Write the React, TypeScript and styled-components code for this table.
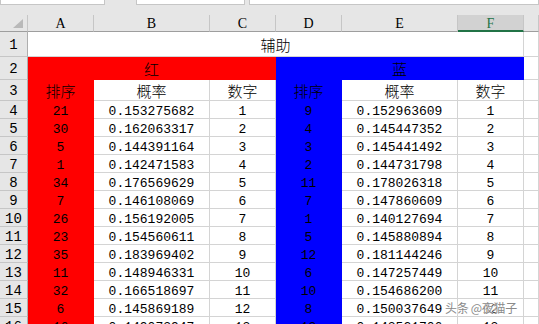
import React from 'react';
import styled, { createGlobalStyle } from 'styled-components';

const GlobalStyle = createGlobalStyle`
  html, body {
    margin: 0;
    padding: 0;
    background: #ffffff;
    overflow: hidden;
  }
  #root {
    width: 539px;
    height: 324px;
    overflow: hidden;
  }
`;

const RED = '#ff0000';
const BLUE = '#0000ff';
const GRID = '#d4d4d4';

const COLUMNS = ['A', 'B', 'C', 'D', 'E', 'F'];

const RED_ORDER = ['21', '30', '5', '1', '34', '7', '26', '23', '35', '11', '32', '6', '16'];
const RED_PROB = [
  '0.153275682',
  '0.162063317',
  '0.144391164',
  '0.142471583',
  '0.176569629',
  '0.146108069',
  '0.156192005',
  '0.154560611',
  '0.183969402',
  '0.148946331',
  '0.166518697',
  '0.145869189',
  '0.149073947',
];
const BLUE_ORDER = ['9', '4', '3', '2', '11', '7', '1', '5', '12', '6', '10', '8', '13'];
const BLUE_PROB = [
  '0.152963609',
  '0.145447352',
  '0.145441492',
  '0.144731798',
  '0.178026318',
  '0.147860609',
  '0.140127694',
  '0.145880894',
  '0.181144246',
  '0.147257449',
  '0.154686200',
  '0.150037649',
  '0.143521706',
];

const App: React.FC = () => {
  return (
    <>
      <GlobalStyle />
      <Screen>
        <TopStrip>
          <BarBox width={105} />
          <BarBox width={109} />
          <BarBox grow />
        </TopStrip>

        <Sheet>
          <Corner>
            <CornerMark />
          </Corner>
          {COLUMNS.map((c) => (
            <ColHeader key={c} selected={c === 'F'}>
              {c}
            </ColHeader>
          ))}
          <ColHeader />

          {/* row 1 */}
          <RowHeader>1</RowHeader>
          <Cell span={6} cjk>
            辅助
          </Cell>
          <Cell />

          {/* row 2 */}
          <RowHeader>2</RowHeader>
          <Cell span={3} fill={RED} cjk>
            红
          </Cell>
          <Cell span={3} fill={BLUE} cjk>
            蓝
          </Cell>
          <Cell />

          {/* row 3 */}
          <RowHeader>3</RowHeader>
          <Cell fill={RED} cjk>
            排序
          </Cell>
          <Cell cjk>概率</Cell>
          <Cell cjk>数字</Cell>
          <Cell fill={BLUE} cjk>
            排序
          </Cell>
          <Cell cjk>概率</Cell>
          <Cell cjk>数字</Cell>
          <Cell />

          {RED_ORDER.map((r, i) => (
            <React.Fragment key={i}>
              <RowHeader>{i + 4}</RowHeader>
              <Cell fill={RED}>{r}</Cell>
              <Cell>{RED_PROB[i]}</Cell>
              <Cell>{i + 1}</Cell>
              <Cell fill={BLUE}>{BLUE_ORDER[i]}</Cell>
              <Cell>{BLUE_PROB[i]}</Cell>
              <Cell>{i + 1}</Cell>
              <Cell />
            </React.Fragment>
          ))}
        </Sheet>

        <Watermark>头条 @夜猫子</Watermark>
      </Screen>
    </>
  );
};

const Screen = styled.div`
  position: relative;
  width: 539px;
  height: 324px;
  overflow: hidden;
  background: #ffffff;
`;

const TopStrip = styled.div`
  display: flex;
  gap: 4px;
  height: 15px;
  background: #e6e6e6;
  align-items: flex-start;
  & > :nth-child(2) {
    margin-left: 27px;
  }
`;

const BarBox = styled.div<{ width?: number; grow?: boolean }>`
  box-sizing: border-box;
  height: 5px;
  width: ${(p) => (p.width ? `${p.width}px` : 'auto')};
  flex: ${(p) => (p.grow ? 1 : 'none')};
  background: #ffffff;
  border: 1px solid #c6c6c6;
  border-top: none;
`;

const Sheet = styled.div`
  display: grid;
  grid-template-columns: 28px 66px 116px 66px 66px 116px 66px 1fr;
  grid-template-rows: 17px 25px 23px 21px repeat(13, 18px);
  font-family: 'Liberation Mono', 'DejaVu Sans Mono', monospace;
  font-size: 13px;
  color: #000000;
`;

const Corner = styled.div`
  position: relative;
  box-sizing: border-box;
  background: #e6e6e6;
  border-right: 1px solid #c6c6c6;
  border-bottom: 1px solid #9e9e9e;
`;

const CornerMark = styled.div`
  position: absolute;
  right: 4px;
  bottom: 3px;
  width: 0;
  height: 0;
  border-left: 10px solid transparent;
  border-bottom: 9px solid #b9b9b9;
`;

const ColHeader = styled.div<{ selected?: boolean }>`
  box-sizing: border-box;
  display: flex;
  align-items: center;
  justify-content: center;
  padding-top: 2px;
  font-family: 'Liberation Serif', 'DejaVu Serif', serif;
  font-size: 14px;
  background: ${(p) => (p.selected ? '#d2d2d2' : '#e6e6e6')};
  color: ${(p) => (p.selected ? '#217346' : '#000000')};
  border-right: 1px solid #c6c6c6;
  border-bottom: ${(p) => (p.selected ? '2px solid #217346' : '1px solid #9e9e9e')};
`;

const RowHeader = styled.div`
  box-sizing: border-box;
  display: flex;
  align-items: center;
  justify-content: center;
  padding-top: 2px;
  background: #e6e6e6;
  border-right: 1px solid #aeaeae;
  border-bottom: 1px solid #c6c6c6;
  font-size: 14px;
`;

const Cell = styled.div<{ span?: number; fill?: string; cjk?: boolean }>`
  box-sizing: border-box;
  grid-column: span ${(p) => p.span ?? 1};
  display: flex;
  align-items: center;
  justify-content: center;
  padding-top: ${(p) => (p.cjk ? '1px' : '3px')};
  white-space: nowrap;
  overflow: hidden;
  background: ${(p) => p.fill ?? '#ffffff'};
  border-right: 1px solid ${(p) => p.fill ?? GRID};
  border-bottom: 1px solid ${(p) => p.fill ?? GRID};
  font-family: ${(p) =>
    p.cjk
      ? "'Noto Sans CJK SC', 'Noto Sans', sans-serif"
      : "'Liberation Mono', 'DejaVu Sans Mono', monospace"};
  font-size: ${(p) => (p.cjk ? '15px' : '13px')};
  font-weight: ${(p) => (p.cjk ? 300 : 400)};
`;

const Watermark = styled.div`
  position: absolute;
  left: 445px;
  top: 299px;
  font-family: 'Noto Sans CJK SC', 'Noto Sans', sans-serif;
  font-size: 12px;
  letter-spacing: -0.3px;
  color: #8a8a8a;
  white-space: nowrap;
  text-shadow: 0 0 2px #ffffff, 0 0 2px #ffffff, 0 0 1px #ffffff;
`;

export default App;
